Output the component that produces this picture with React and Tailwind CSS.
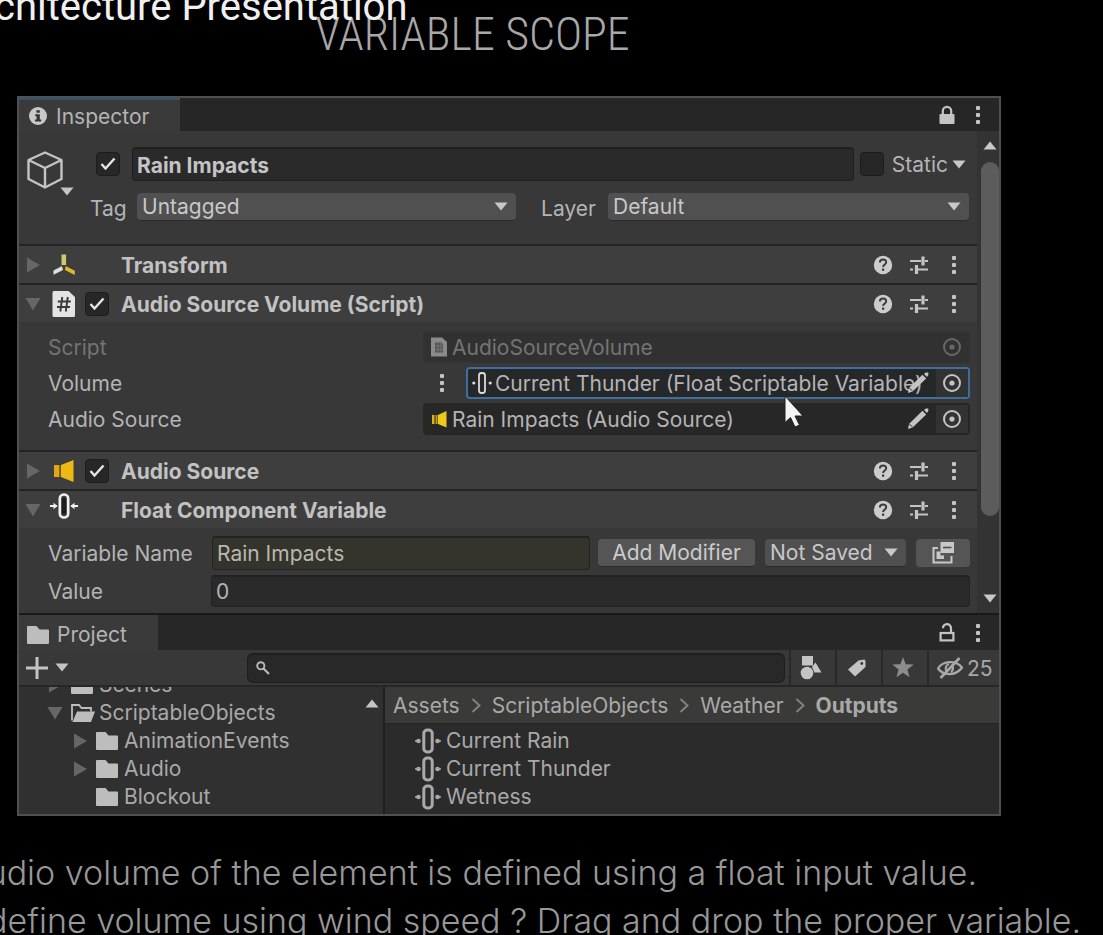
import React from "react";

const Dots = ({ className = "" }) => (
  <svg width="6" height="20" viewBox="0 0 6 20" className={`shrink-0 ${className}`} fill="currentColor" aria-hidden="true">
    <rect x="1" y="1" width="4" height="4" rx="1" />
    <rect x="1" y="8" width="4" height="4" rx="1" />
    <rect x="1" y="15" width="4" height="4" rx="1" />
  </svg>
);

const Caret = ({ className = "" }) => (
  <svg width="14" height="9" viewBox="0 0 14 9" className={`shrink-0 ${className}`} fill="currentColor" aria-hidden="true">
    <path d="M0.5 0.5h13L7 8.5z" />
  </svg>
);

const Foldout = ({ open }) => (
  <svg width="16" height="16" viewBox="0 0 16 16" className="shrink-0 text-[#666666]" fill="currentColor" aria-hidden="true">
    {open ? <path d="M0.5 2h15L8 14.5z" /> : <path d="M2 0.5v15L15 8z" />}
  </svg>
);

const InfoIcon = () => (
  <svg width="18" height="18" viewBox="0 0 18 18" className="shrink-0" aria-hidden="true">
    <circle cx="9" cy="9" r="9" fill="#c8c8c8" />
    <path d="M7.4 3.2h3.4v2.6H7.4zM6.2 7.2h4.6v5.4h1.4v2H6v-2h1.6V9.2H6.2z" fill="#333333" />
  </svg>
);

const LockIcon = () => (
  <svg width="16" height="20" viewBox="0 0 16 20" aria-hidden="true">
    <path d="M3.8 10V6a4.2 4.2 0 0 1 8.4 0v4" fill="none" stroke="currentColor" strokeWidth="2.2" />
    <rect x="0.5" y="9" width="15" height="10" rx="1" fill="currentColor" />
  </svg>
);

const UnlockIcon = () => (
  <svg width="16" height="20" viewBox="0 0 16 20" fill="none" stroke="currentColor" strokeWidth="2.2" aria-hidden="true">
    <path d="M4 5.2a4 4 0 0 1 8-.2v4.500" />
    <rect x="1.600" y="10" width="12.800" height="7.400" />
  </svg>
);

const CubeIcon = () => (
  <svg width="36" height="38" viewBox="0 0 36 38" fill="none" stroke="#c4c4c4" strokeWidth="2.4" strokeLinejoin="round" aria-hidden="true">
    <path d="M18 1.500 34.500 9v19L18 36.500 1.500 28V9zM1.500 9 18 17 34.500 9M18 17v19.500" />
  </svg>
);

const TransformIcon = () => (
  <svg width="24" height="24" viewBox="0 0 24 24" aria-hidden="true">
    <path d="M9.500 1.500h4.600v10.500h-4.600z" fill="#c9cf68" />
    <path d="M10 13 1.500 17.500v4.300L11 17z" fill="#dedede" />
    <path d="M13.500 13 22.800 17.800v4.200L13 17z" fill="#e3b62b" />
    <path d="m11.800 12 2 2-2 2-2-2z" fill="#4a4520" />
  </svg>
);

const ScriptIcon = () => (
  <svg width="24" height="26" viewBox="0 0 24 26" aria-hidden="true">
    <path d="M2 0h14.500L23 6v18.500a1.500 1.500 0 0 1-1.500 1.500H2a1.500 1.500 0 0 1-1.500-1.500v-23A1.500 1.500 0 0 1 2 0z" fill="#e4e4e4" />
    <path d="M10.300 6 8.300 20.500M15.800 6l-2 14.500M5.800 10.500h13M5 16h13" stroke="#3a3a3a" strokeWidth="1.900" fill="none" />
  </svg>
);

const ScriptSmallIcon = () => (
  <svg width="18" height="20" viewBox="0 0 18 20" className="shrink-0" aria-hidden="true">
    <path d="M1 0.500h11L17 5v14.500H1z" fill="#8a8a8a" />
    <path d="M5 5.500h6.500l1.500 2v8H5z" fill="#555555" />
    <path d="M8 6v9M11 6v9M5 9h8M5 12.500h8" stroke="#777777" strokeWidth="0.800" />
  </svg>
);

const SpeakerIcon = () => (
  <svg width="22" height="24" viewBox="0 0 22 24" aria-hidden="true">
    <path d="M1 6h5.500v12H1z" fill="#e2a711" />
    <path d="M8 6 20.500 1v22L8 18z" fill="#edb913" />
    <path d="M7.200 6v12" stroke="#7d5a08" strokeWidth="1.400" />
  </svg>
);

const SpeakerSmallIcon = () => (
  <svg width="18" height="18" viewBox="0 0 18 18" className="shrink-0" aria-hidden="true">
    <path d="M2 5h2.500v9H2z" fill="#e0b414" />
    <path d="M5.500 5h2v9h-2z" fill="#c49c12" />
    <path d="M8 5 16.500 1v16.500L8 14z" fill="#f0c818" />
  </svg>
);

const VarIcon = ({ className = "" }) => (
  <svg width="28" height="26" viewBox="0 0 28 26" className={`shrink-0 ${className}`} fill="none" stroke="currentColor" aria-hidden="true">
    <rect x="9.800" y="1.500" width="8.400" height="23" rx="4" strokeWidth="2.600" />
    <rect x="12" y="4.500" width="4" height="17" rx="2" fill="#1c1c1c" stroke="none" />
    <path d="M0 13h7M28 13h-7" strokeWidth="1.800" />
    <path d="M3.500 9.800 7.500 13l-4 3.200zM24.500 9.800 20.500 13l4 3.200z" fill="currentColor" stroke="none" />
  </svg>
);

const VarDotIcon = ({ className = "" }) => (
  <svg width="28" height="26" viewBox="0 0 28 26" className={`shrink-0 ${className}`} fill="none" stroke="currentColor" aria-hidden="true">
    <rect x="9.800" y="2" width="8.400" height="22" rx="3.500" strokeWidth="3" />
    <path d="M1 13h2M27 13h-2" strokeWidth="1.500" />
    <circle cx="4.500" cy="13" r="2.300" fill="currentColor" stroke="none" />
    <circle cx="23.500" cy="13" r="2.300" fill="currentColor" stroke="none" />
  </svg>
);

const VarFieldIcon = () => (
  <svg width="20" height="24" viewBox="0 0 20 24" className="shrink-0" fill="none" stroke="#dadada" aria-hidden="true">
    <rect x="7" y="2" width="6" height="20" rx="2.500" strokeWidth="1.800" />
    <circle cx="1.800" cy="12" r="1.600" fill="#dadada" stroke="none" />
    <circle cx="18.200" cy="12" r="1.600" fill="#dadada" stroke="none" />
  </svg>
);

const HelpIcon = () => (
  <svg width="20" height="20" viewBox="0 0 20 20" aria-hidden="true">
    <circle cx="10" cy="10" r="9.200" fill="#cccccc" />
    <path d="M6.900 7.600c0-4.100 6.300-4 6.300-.4 0 2.300-3.100 2.200-3.100 4.800" fill="none" stroke="#3c3c3c" strokeWidth="2" />
    <rect x="9" y="13.500" width="2.200" height="2.300" fill="#3c3c3c" />
  </svg>
);

const PresetIcon = () => (
  <svg width="20" height="20" viewBox="0 0 20 20" fill="none" stroke="currentColor" aria-hidden="true">
    <path d="M1 6h11M16 6h3M1 14.500h3M9 14.500h10" strokeWidth="1.800" />
    <path d="M14 1.500v9M7.500 10v9" strokeWidth="3.200" />
  </svg>
);

const PencilIcon = () => (
  <svg width="24" height="24" viewBox="0 0 24 24" fill="currentColor" aria-hidden="true">
    <path d="M16.400 3.800 20.200 7.600 6.600 20.600 2 22l1-5z" />
    <path d="m18 3 1.800-1.500h2.500v2.500L21 6z" />
    <path d="m3.400 17 3 3" stroke="#303030" strokeWidth="1" />
  </svg>
);

const TargetIcon = () => (
  <svg width="20" height="20" viewBox="0 0 20 20" aria-hidden="true">
    <circle cx="10" cy="10" r="8" fill="none" stroke="currentColor" strokeWidth="2" />
    <circle cx="10" cy="10" r="2.600" fill="currentColor" />
  </svg>
);

const FolderIcon = () => (
  <svg width="22" height="18" viewBox="0 0 22 18" className="shrink-0" fill="#bdbdbd" aria-hidden="true">
    <path d="M1 0h8.500l3 3.500H21a1 1 0 0 1 1 1V17a1 1 0 0 1-1 1H1a1 1 0 0 1-1-1V1a1 1 0 0 1 1-1z" />
  </svg>
);

const FolderOpenIcon = () => (
  <svg width="24" height="18" viewBox="0 0 24 18" className="shrink-0" aria-hidden="true">
    <path d="M1 16.500V1h7l2.500 3H20v3.500" fill="none" stroke="#bdbdbd" strokeWidth="1.800" />
    <path d="M6 7.500h18L20 18H1.500z" fill="#bdbdbd" />
  </svg>
);

const SearchIcon = () => (
  <svg width="14" height="14" viewBox="0 0 14 14" fill="none" stroke="#b8b8b8" aria-hidden="true">
    <circle cx="4.800" cy="4.800" r="3.600" strokeWidth="1.900" />
    <path d="m7.500 7.500 5.500 5.500" strokeWidth="2.200" />
  </svg>
);

const PlusIcon = () => (
  <svg width="22" height="22" viewBox="0 0 22 22" stroke="currentColor" strokeWidth="3" aria-hidden="true">
    <path d="M11 0v22M0 11h22" />
  </svg>
);

const ShapesIcon = () => (
  <svg width="22" height="24" viewBox="0 0 22 24" fill="currentColor" aria-hidden="true">
    <rect x="2" y="0" width="11" height="9.500" />
    <circle cx="7" cy="17" r="6.300" />
    <path d="M15.500 6.500 21.500 16.500h-7L12 11z" />
  </svg>
);

const TagIcon = () => (
  <svg width="20" height="20" viewBox="0 0 20 20" aria-hidden="true">
    <path d="M11.500 2.500 17.500 1.500 18.500 3v6L8 18.500 1 11.500z" fill="currentColor" />
    <circle cx="14.800" cy="5.500" r="1.400" fill="#3a3a3a" />
  </svg>
);

const StarIcon = () => (
  <svg width="22" height="21" viewBox="0 0 22 21" fill="#8c8c8c" aria-hidden="true">
    <path d="m11 0 2.700 7.300 8 .3-6.300 4.900 2.200 7.700L11 15.800l-6.600 4.400 2.200-7.700L.3 7.600l8-.3z" />
  </svg>
);

const HiddenIcon = () => (
  <svg width="26" height="22" viewBox="0 0 26 22" fill="none" stroke="currentColor" aria-hidden="true">
    <path d="M1 11.500C6 3.500 19 3 25 10.500 19.500 18.500 7 19.500 1 11.500z" strokeWidth="2.300" />
    <path d="M10 14.500a4.500 4.500 0 0 1 2-7.500M15 8.500a4.500 4.500 0 0 1-1 6.500" strokeWidth="2.200" />
    <path d="M22.500 1 3.500 21" strokeWidth="2.600" />
  </svg>
);

const WindowsIcon = () => (
  <svg width="22" height="22" viewBox="0 0 22 22" aria-hidden="true">
    <path d="M6 6H1.500v14.500h18V14" fill="none" stroke="currentColor" strokeWidth="2" />
    <path d="M8.500 0H22v11H8.500z" fill="currentColor" />
    <path d="M11 5.500h8.500" stroke="#4d4d4d" strokeWidth="1.600" />
    <path d="M4.500 9.500h4v4h3.500v3.500H4.500z" fill="currentColor" />
  </svg>
);

const Crumb = () => (
  <svg width="10" height="15" viewBox="0 0 10 15" className="shrink-0" fill="none" stroke="#828282" strokeWidth="2" aria-hidden="true">
    <path d="m1.500 1 7 6.500-7 6.500" />
  </svg>
);

const Pointer = () => (
  <svg width="20" height="35" viewBox="0 0 20 35" aria-hidden="true">
    <path d="M1 1v26.500l5.500-5 4.500 9.500 4.500-2L11 21h8z" fill="#f5f5f5" stroke="#222222" strokeWidth="1" />
  </svg>
);

function Check({ label, checked = false }) {
  return (
    <span className="relative flex size-6 shrink-0">
      <input
        type="checkbox"
        aria-label={label}
        defaultChecked={checked}
        className="peer size-6 appearance-none rounded-sm border border-[#1d1d1d] bg-[#272727]"
      />
      <svg
        width="16"
        height="14"
        viewBox="0 0 16 14"
        className="pointer-events-none absolute top-[5px] left-1 hidden peer-checked:block"
        fill="none"
        stroke="#e6e6e6"
        strokeWidth="2.400"
        aria-hidden="true"
      >
        <path d="m1.500 7 4 4.500L14.500 1.500" />
      </svg>
    </span>
  );
}

function Dropdown({ id, value, label, className = "", caret = "right-2" }) {
  return (
    <span className={`relative flex ${className}`}>
      <select
        id={id}
        aria-label={label}
        defaultValue={value}
        className="h-7 w-full appearance-none rounded-sm border-b border-[#2a2a2a] bg-[#505050] pl-[5px] text-[#c8c8c8]"
      >
        <option>{value}</option>
      </select>
      <Caret className={`pointer-events-none absolute top-[9px] text-[#c8c8c8] ${caret}`} />
    </span>
  );
}

function ComponentHeader({ title, open, icon, toggle }) {
  return (
    <div className="flex h-[39px] items-center border-t-2 border-[#242424] bg-[#3e3e3e] pr-[14px] pl-[6px]">
      <button type="button" aria-label={`Expand ${title}`} className="flex w-6">
        <Foldout open={open} />
      </button>
      <span className="flex w-9 justify-center pr-[6px]">{icon}</span>
      <span className="flex w-9">{toggle ? <Check label={`Enable ${title}`} checked /> : null}</span>
      <h2 className="flex-1 pt-[2px] font-bold text-[#c2c2c2]">{title}</h2>
      <div className="flex items-center gap-4 text-[#c4c4c4]">
        <button type="button" aria-label="Help"><HelpIcon /></button>
        <button type="button" aria-label="Presets"><PresetIcon /></button>
        <button type="button" aria-label="More" className="px-[6px]"><Dots /></button>
      </div>
    </div>
  );
}

function ObjectField({ icon, text, focused, disabled, edit }) {
  const frame = focused
    ? "border-[#3d6f9e] bg-[#262729]"
    : disabled
      ? "border-[#333333] bg-[#313131] text-[#747474]"
      : "border-[#262626] bg-[#272727]";
  return (
    <div className={`relative flex h-8 min-w-0 flex-1 items-center rounded-sm border-2 pl-1 ${frame}`}>
      <span className="flex w-5 shrink-0 justify-center">{icon}</span>
      <span className="pt-[2px] pl-[3px] whitespace-nowrap">{text}</span>
      <div className="absolute right-0 flex items-center text-[#c4c4c4]">
        {edit ? (
          <button type="button" aria-label={`Edit ${text}`} className="mr-[6px] flex"><PencilIcon /></button>
        ) : null}
        <button
          type="button"
          aria-label={`Pick ${text}`}
          className={disabled ? "flex h-7 w-8 items-center justify-center text-[#686868]" : "flex h-7 w-8 items-center justify-center bg-[#323232]"}
        >
          <TargetIcon />
        </button>
      </div>
    </div>
  );
}

function Property({ label, dim, children }) {
  return (
    <div className="flex items-center pr-[7px] pl-[29px]">
      <span className={dim ? "w-[375px] shrink-0 pt-[2px] text-[#747474]" : "w-[375px] shrink-0 pt-[2px]"}>{label}</span>
      {children}
    </div>
  );
}

function TreeRow({ label, open, leaf, nested }) {
  return (
    <li className={nested ? "flex h-7 items-center pl-[53px]" : "flex h-7 items-center pl-7"}>
      <span className="flex w-6 shrink-0">{leaf ? null : <Foldout open={open} />}</span>
      <span className="flex w-7 shrink-0">{open ? <FolderOpenIcon /> : <FolderIcon />}</span>
      {label}
    </li>
  );
}

const toolButton = "flex h-9 w-[46px] items-center justify-center border-l-2 border-[#292929] pr-1";

export default function App() {
  return (
    <div className="relative h-screen overflow-hidden bg-black font-['Inter','Liberation_Sans',sans-serif] text-[#b4b4b4]">
      <p className="absolute -top-[14px] -left-[6px] z-10 font-['Roboto',sans-serif] text-[40px] leading-[42px] whitespace-nowrap text-[#f0f0f0]">
        chitecture Presentation
      </p>
      <h1 className="flex h-24 justify-center pt-2 pr-[158px] font-['Roboto_Condensed','Roboto',sans-serif] text-[46px] leading-[52px] font-light text-[#a8a8a8]">
        VARIABLE SCOPE
      </h1>

      <main className="mr-[102px] ml-[17px] border-2 border-[#505050] bg-[#383838] text-[21px] leading-6">
        <section aria-label="Inspector">
          <div className="flex h-[33px] items-center bg-[#262626] text-[#c4c4c4]">
            <div className="flex h-full w-[161px] items-center gap-[9px] border-t-2 border-[#33546f] bg-[#3a3a3a] pl-[10px] text-[#b4b4b4]">
              <InfoIcon />
              <span className="pt-[3px]">Inspector</span>
            </div>
            <div className="ml-auto flex items-center gap-5 pr-[18px]">
              <button type="button" aria-label="Lock inspector"><LockIcon /></button>
              <button type="button" aria-label="Inspector menu"><Dots /></button>
            </div>
          </div>

          <div className="flex">
            <div className="min-w-0 flex-1">
              <div className="flex h-[113px] pt-4 pr-2 pl-2">
                <button type="button" aria-label="Object icon" className="relative mt-1 flex h-12 w-[69px] shrink-0 items-start">
                  <CubeIcon />
                  <Caret className="absolute top-9 left-[33px] text-[#c4c4c4]" />
                </button>
                <div className="flex min-w-0 flex-1 flex-col gap-3">
                  <div className="flex h-[34px] items-center">
                    <Check label="Active" checked />
                    <input
                      aria-label="Object name"
                      defaultValue="Rain Impacts"
                      className="ml-3 h-[34px] min-w-0 flex-1 rounded-sm border border-t-2 border-[#1f1f1f] bg-[#2a2a2a] pt-px pl-1 font-bold text-[#c4c4c4]"
                    />
                    <label className="ml-[6px] flex items-center gap-2">
                      <Check label="Static" />
                      <span className="pt-[2px]">Static</span>
                    </label>
                    <Caret className="mr-[3px] ml-1 text-[#c8c8c8]" />
                  </div>
                  <div className="-ml-[6px] flex items-center">
                    <label htmlFor="tag" className="w-[47px] pt-1">Tag</label>
                    <Dropdown id="tag" value="Untagged" className="flex-[378]" />
                    <label htmlFor="layer" className="w-[92px] pt-1 pl-[25px]">Layer</label>
                    <Dropdown id="layer" value="Default" className="flex-[360]" />
                  </div>
                </div>
              </div>

              <ComponentHeader title="Transform" icon={<TransformIcon />} />
              <ComponentHeader title="Audio Source Volume (Script)" icon={<ScriptIcon />} open toggle />
              <div className="flex flex-col gap-1 pt-[9px] pb-[15px]">
                <Property label="Script" dim>
                  <ObjectField icon={<ScriptSmallIcon />} text="AudioSourceVolume" disabled />
                </Property>
                <Property label="Volume">
                  <button type="button" aria-label="Volume menu" className="w-[43px] shrink-0 pl-4 text-[#c4c4c4]"><Dots /></button>
                  <div className="relative flex min-w-0 flex-1">
                    <ObjectField icon={<VarFieldIcon />} text="Current Thunder (Float Scriptable Variable)" focused edit />
                    <span className="pointer-events-none absolute top-7 right-[166px] z-10"><Pointer /></span>
                  </div>
                </Property>
                <Property label="Audio Source">
                  <ObjectField icon={<SpeakerSmallIcon />} text="Rain Impacts (Audio Source)" edit />
                </Property>
              </div>

              <ComponentHeader title="Audio Source" icon={<SpeakerIcon />} toggle />
              <ComponentHeader title="Float Component Variable" icon={<VarIcon className="-mt-2 text-[#f0f0f0]" />} open />
              <div className="flex flex-col gap-[5px] pt-2 pr-[7px] pb-[6px] pl-[29px]">
                <div className="flex items-center">
                  <label htmlFor="variable-name" className="w-[164px] shrink-0 pt-px">Variable Name</label>
                  <input
                    id="variable-name"
                    defaultValue="Rain Impacts"
                    className="h-[34px] min-w-0 flex-1 rounded-sm border border-t-2 border-[#222222] bg-[#34342c] pl-1 text-[#b8b8ae]"
                  />
                  <button type="button" className="ml-2 h-7 w-[157px] rounded-sm border-b border-[#2a2a2a] bg-[#555555] text-[#cccccc]">
                    Add Modifier
                  </button>
                  <Dropdown label="Save state" value="Not Saved" className="ml-[10px] w-[141px]" />
                  <button type="button" aria-label="Open window" className="ml-[10px] flex h-7 w-[54px] items-center justify-center rounded-sm bg-[#555555] text-[#c8c8c8]">
                    <WindowsIcon />
                  </button>
                </div>
                <div className="flex items-center">
                  <label htmlFor="value" className="w-[163px] shrink-0 pt-px">Value</label>
                  <input
                    id="value"
                    defaultValue="0"
                    className="h-8 min-w-0 flex-1 rounded-sm border border-t-2 border-[#222222] bg-[#2a2a2a] pl-1"
                  />
                </div>
              </div>
            </div>

            <div className="flex w-[22px] shrink-0 flex-col items-center bg-[#333333] pt-[10px] pl-[3px] text-[#c8c8c8]" aria-hidden="true">
              <Caret className="rotate-180" />
              <div className="mt-3 mb-[78px] w-[18px] flex-1 rounded-full bg-[#5c5c5c]" />
              <Caret className="mb-[10px]" />
            </div>
          </div>
        </section>

        <section aria-label="Project" className="border-t-2 border-[#191919]">
          <div className="flex h-[35px] items-center bg-[#272727] text-[#c4c4c4]">
            <div className="flex h-full w-[139px] items-center gap-2 bg-[#3a3a3a] pt-[5px] pl-2 text-[#b4b4b4]">
              <FolderIcon />
              Project
            </div>
            <div className="ml-auto flex items-center gap-5 pr-[18px]">
              <button type="button" aria-label="Lock project"><UnlockIcon /></button>
              <button type="button" aria-label="Project menu"><Dots /></button>
            </div>
          </div>

          <div className="flex h-[37px] items-center border-b-2 border-[#262626] pl-[7px] text-[#c4c4c4]">
            <button type="button" aria-label="Create" className="flex w-[221px] items-center gap-[7px]">
              <PlusIcon />
              <Caret />
            </button>
            <label className="flex h-[30px] min-w-0 flex-1 items-center rounded-md border border-t-2 border-[#1e1e1e] bg-[#282828] pl-2">
              <SearchIcon />
              <input type="search" aria-label="Search" className="min-w-0 flex-1 bg-transparent pl-2 outline-none" />
            </label>
            <button type="button" aria-label="Search by type" className={`ml-1 ${toolButton}`}><ShapesIcon /></button>
            <button type="button" aria-label="Search by label" className={toolButton}><TagIcon /></button>
            <button type="button" aria-label="Favorites" className={toolButton}><StarIcon /></button>
            <button type="button" aria-label="Hidden packages" className="flex h-9 w-[72px] items-center gap-1 border-l-2 border-[#292929] pl-2 text-[#a8a8a8]">
              <HiddenIcon />
              <span className="pt-[2px]">25</span>
            </button>
          </div>

          <div className="flex text-[#a9a9a9]">
            <div className="flex w-[366px] shrink-0 overflow-hidden border-r-2 border-[#1f1f1f] bg-[#303030]">
              <ul className="-mt-4 min-w-0 flex-1">
                <TreeRow label="Scenes" />
                <TreeRow label="ScriptableObjects" open />
                <TreeRow label="AnimationEvents" nested />
                <TreeRow label="Audio" nested />
                <TreeRow label="Blockout" nested leaf />
              </ul>
              <Caret className="mt-3 mr-1 rotate-180 text-[#c4c4c4]" />
            </div>
            <div className="min-w-0 flex-1 bg-[#2b2b2b]">
              <nav aria-label="Path" className="flex h-[37px] items-center gap-[11px] border-b border-[#262626] bg-[#3a3a39] pt-px pl-2">
                <a href="#assets">Assets</a>
                <Crumb />
                <a href="#objects">ScriptableObjects</a>
                <Crumb />
                <a href="#weather">Weather</a>
                <Crumb />
                <a href="#outputs" className="font-bold">Outputs</a>
              </nav>
              <ul className="pt-[3px] pb-[3px] pl-[29px]">
                {["Current Rain", "Current Thunder", "Wetness"].map((name) => (
                  <li key={name} className="flex h-7 items-center gap-1">
                    <VarDotIcon />
                    {name}
                  </li>
                ))}
              </ul>
            </div>
          </div>
        </section>
      </main>

      <div className="flex flex-col items-end pt-[33px] text-[34px] leading-[48px] font-light whitespace-nowrap text-[#989898]">
        <p className="pr-[126px]">udio volume of the element is defined using a float input value.</p>
        <p className="pr-[22px]">define volume using wind speed ? Drag and drop the proper variable.</p>
      </div>
    </div>
  );
}
